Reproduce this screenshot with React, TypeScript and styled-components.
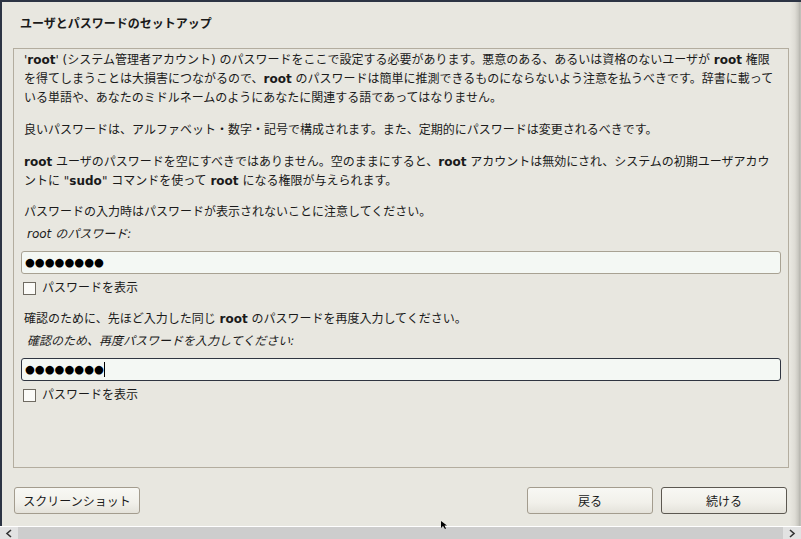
import React from 'react'
import styled, { createGlobalStyle } from 'styled-components'

const GlobalStyle = createGlobalStyle`
  html, body {
    margin: 0;
    padding: 0;
    background: #e8e7e0;
  }
  #root {
    width: 801px;
    height: 539px;
    overflow: hidden;
  }
`

const font = `"DejaVu Sans", "Noto Sans CJK JP", sans-serif`

const Screen = styled.div`
  position: relative;
  width: 801px;
  height: 539px;
  display: flex;
  flex-direction: column;
  background: #e8e7e0;
  font-family: ${font};
  color: #1a1a1a;
  text-autospace: no-autospace;
`

const TopEdge = styled.div`
  height: 2px;
  background: #2c3444;
  flex: none;
`

const Middle = styled.div`
  flex: 1;
  display: flex;
  min-height: 0;
`

const LeftEdge = styled.div`
  width: 2px;
  background: #2c3444;
  flex: none;
`

const RightEdge = styled.div`
  width: 11px;
  flex: none;
  background: linear-gradient(to right, #e8e7e0 0%, #dedcd5 45%, #c9c8c1 75%, #b9b8b1 88%, #c6c5bf 100%);
`

const Main = styled.div`
  flex: 1;
  display: flex;
  flex-direction: column;
  padding: 0 1px 0 11px;
  min-width: 0;
`

const Title = styled.div`
  height: 46px;
  box-sizing: border-box;
  padding: 14px 0 0 7px;
  font-size: 12px;
  font-weight: bold;
  line-height: 16px;
`

const Frame = styled.div`
  height: 420px;
  box-sizing: border-box;
  border: 1px solid #b3ad9f;
  padding: 2px 7px 0 0;
  font-size: 12px;
  line-height: 19px;
`

const Para = styled.p<{ $gap?: number }>`
  margin: ${(p) => p.$gap ?? 0}px 0 0 10px;
  white-space: nowrap;
`

const Label = styled.div`
  margin: 3px 0 0 13px;
  font-style: italic;
`

const Field = styled.div<{ $focused?: boolean }>`
  margin: 7px 0 0 7px;
  height: 23px;
  box-sizing: border-box;
  border: 1px solid ${(p) => (p.$focused ? '#2f3541' : '#a8a293')};
  border-radius: 3px;
  background: #f4f8f4;
  display: flex;
  align-items: center;
  padding-left: 3px;
`

const Dots = styled.span`
  font-family: "DejaVu Sans", sans-serif;
  font-size: 11.3px;
  line-height: 14px;
  color: #000;
`

const Caret = styled.span`
  display: inline-block;
  width: 1px;
  height: 15px;
  background: #000;
`

const CheckRow = styled.label`
  margin: 5px 0 0 9px;
  display: flex;
  align-items: center;
  gap: 6px;
  height: 19px;
`

const Box = styled.span`
  width: 13px;
  height: 13px;
  box-sizing: border-box;
  border: 1px solid #6f6b62;
  background: #fbfbf8;
  flex: none;
`

const ButtonBar = styled.div`
  height: 27px;
  margin-top: 19px;
  padding: 0 2px 0 1px;
  display: flex;
  gap: 8px;
`

const Button = styled.button<{ $default?: boolean; $push?: boolean }>`
  width: 126px;
  height: 27px;
  margin-left: ${(p) => (p.$push ? 'auto' : '0')};
  border: 1px solid ${(p) => (p.$default ? '#5c5851' : '#a39c8e')};
  border-radius: 3px;
  background: linear-gradient(to bottom, #f8f8f4 0%, #f1f0ea 60%, #e4e2da 100%);
  font-family: ${font};
  font-size: 12px;
  color: #1a1a1a;
  padding: 0;
`

const Spacer = styled.div`
  height: 12px;
  flex: none;
`

const ScrollBar = styled.div`
  height: 13px;
  flex: none;
  border-top: 1px solid #ffffff;
  box-sizing: border-box;
  background: #cdcdcd;
  display: flex;
  justify-content: space-between;
`

const Arrow = styled.div`
  width: 18px;
  background: #e2e2e2;
  display: flex;
  align-items: center;
  justify-content: center;
`

const Pointer = styled.svg`
  position: absolute;
  left: 441px;
  top: 521px;
`

export default function App() {
  return (
    <Screen>
      <GlobalStyle />
      <TopEdge />
      <Middle>
        <LeftEdge />
        <Main>
          <Title>ユーザとパスワードのセットアップ</Title>
          <Frame>
            <Para>
              '<b>root</b>' (システム管理者アカウント) のパスワードをここで設定する必要があります。悪意のある、あるいは資格のないユーザが <b>root</b> 権限
              <br />
              を得てしまうことは大損害につながるので、<b>root</b> のパスワードは簡単に推測できるものにならないよう注意を払うべきです。辞書に載って
              <br />
              いる単語や、あなたのミドルネームのようにあなたに関連する語であってはなりません。
            </Para>
            <Para $gap={13}>良いパスワードは、アルファベット・数字・記号で構成されます。また、定期的にパスワードは変更されるべきです。</Para>
            <Para $gap={13}>
              <b>root</b> ユーザのパスワードを空にすべきではありません。空のままにすると、<b>root</b> アカウントは無効にされ、システムの初期ユーザアカウ
              <br />
              ントに "<b>sudo</b>" コマンドを使って <b>root</b> になる権限が与えられます。
            </Para>
            <Para $gap={12}>パスワードの入力時はパスワードが表示されないことに注意してください。</Para>
            <Label>root のパスワード:</Label>
            <Field>
              <Dots>●●●●●●●●</Dots>
            </Field>
            <CheckRow>
              <Box />
              パスワードを表示
            </CheckRow>
            <Para $gap={12}>
              確認のために、先ほど入力した同じ <b>root</b> のパスワードを再度入力してください。
            </Para>
            <Label>確認のため、再度パスワードを入力してください:</Label>
            <Field $focused>
              <Dots>●●●●●●●●</Dots>
              <Caret />
            </Field>
            <CheckRow>
              <Box />
              パスワードを表示
            </CheckRow>
          </Frame>
          <ButtonBar>
            <Button>スクリーンショット</Button>
            <Button $push>戻る</Button>
            <Button $default>続ける</Button>
          </ButtonBar>
          <Spacer />
        </Main>
        <RightEdge />
      </Middle>
      <ScrollBar>
        <Arrow>
          <svg width="8" height="9" viewBox="0 0 8 9">
            <path d="M6 1 L2 4.5 L6 8" fill="none" stroke="#333" strokeWidth="1.6" />
          </svg>
        </Arrow>
        <Arrow>
          <svg width="8" height="9" viewBox="0 0 8 9">
            <path d="M2 1 L6 4.5 L2 8" fill="none" stroke="#333" strokeWidth="1.6" />
          </svg>
        </Arrow>
      </ScrollBar>
      <Pointer width="7" height="8" viewBox="0 0 7 8">
        <path d="M0 0 L0 7 L2 5 L4 8 L5 7.5 L3.5 4.5 L6 4.5 Z" fill="#000" />
      </Pointer>
    </Screen>
  )
}
